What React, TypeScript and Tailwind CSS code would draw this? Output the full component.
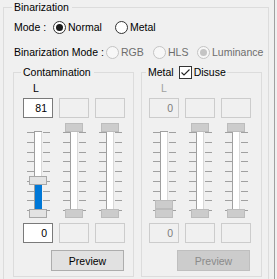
import React from "react";

const TICKS = [9, 19, 29, 38, 48, 58, 68, 77, 87];

function Slider({
  top,
  bottom,
  enabled,
}: {
  top: number;
  bottom: number;
  enabled: boolean;
}) {
  const thumbFill = enabled ? "#e3e3e3" : "#cccccc";
  const thumbStroke = enabled ? "#a8a8a8" : "#bcbcbc";
  return (
    <svg width="30" height="95" viewBox="0 0 30 95" className="block">
      {TICKS.map((y) => (
        <g key={y}>
          <rect x="4" y={y} width="7" height="1" fill="#a0a0a0" />
          <rect x="20" y={y} width="7" height="1" fill="#a0a0a0" />
        </g>
      ))}
      <rect x="11" y="8" width="1" height="84" fill="#a0a0a0" />
      <rect x="12" y="8" width="6" height="84" fill="#ffffff" />
      <rect x="18" y="8" width="1" height="84" fill="#dadada" />
      <rect x="11" y="8" width="8" height="1" fill="#a0a0a0" />
      {enabled && bottom - (top + 9) > 0 && (
        <rect x="12" y={top + 9} width="7" height={bottom - top - 9} fill="#0078d7" />
      )}
      <rect
        x="6.5"
        y={top + 0.5}
        width="17"
        height="8"
        fill={thumbFill}
        stroke={thumbStroke}
      />
      <rect
        x="6.5"
        y={bottom + 0.5}
        width="17"
        height="8"
        fill={thumbFill}
        stroke={thumbStroke}
      />
    </svg>
  );
}

function Radio({
  checked,
  disabled,
  label,
  width,
}: {
  checked?: boolean;
  disabled?: boolean;
  label: string;
  width: string;
}) {
  return (
    <div className={`flex items-center ${width}`}>
      <span
        className={`flex h-[13px] w-[13px] shrink-0 items-center justify-center rounded-full border ${
          disabled ? "border-[#c4c4c4] bg-[#f7f7f7]" : "border-[#333333] bg-white"
        }`}
      >
        {checked && (
          <span
            className={`block h-[7px] w-[7px] rounded-full ${
              disabled ? "bg-[#c4c4c4]" : "bg-[#1a1a1a]"
            }`}
          />
        )}
      </span>
      <span className={`ml-[2px] whitespace-nowrap ${disabled ? "text-[#6d6d6d]" : "text-black"}`}>
        {label}
      </span>
    </div>
  );
}

function Box({ value, active, gray }: { value?: string; active?: boolean; gray?: boolean }) {
  return (
    <div
      className={`flex h-[20px] w-[30px] items-center justify-end border pr-[5px] ${
        active ? "border-[#7a7a7a] bg-white text-black" : "border-[#cccccc] bg-[#f0f0f0]"
      } ${gray ? "text-[#7d7d7d]" : ""}`}
    >
      {value}
    </div>
  );
}

function Panel({
  legend,
  textPl,
  btnPl,
  lColor,
  topVals,
  bottomVals,
  activeFirst,
  sliders,
  btnEnabled,
}: {
  legend: React.ReactNode;
  textPl: string;
  btnPl: string;
  lColor: string;
  topVals: (string | undefined)[];
  bottomVals: (string | undefined)[];
  activeFirst: boolean;
  sliders: { top: number; bottom: number; enabled: boolean }[];
  btnEnabled: boolean;
}) {
  return (
    <div className="flex flex-col pb-[5px]">
      <div className={`mt-[2px] h-[14px] pl-[19px] ${lColor}`}>L</div>
      <div className={`mt-[3px] flex gap-[6px] ${textPl}`}>
        {topVals.map((v, i) => (
          <Box key={i} value={v} active={activeFirst && i === 0} gray={!activeFirst} />
        ))}
      </div>
      <div className={`mt-[5px] flex gap-[6px] ${textPl}`}>
        {sliders.map((s, i) => (
          <Slider key={i} top={s.top} bottom={s.bottom} enabled={s.enabled} />
        ))}
      </div>
      <div className={`mt-[5px] flex gap-[6px] ${textPl}`}>
        {bottomVals.map((v, i) => (
          <Box key={i} value={v} active={activeFirst && i === 0} gray={!activeFirst} />
        ))}
      </div>
      <div className={`mt-[7px] flex ${btnPl}`}>
        <div
          className={`flex h-[21px] w-[73px] items-center justify-center border ${
            btnEnabled
              ? "border-[#adadad] bg-[#e1e1e1] text-black"
              : "border-[#bfbfbf] bg-[#cccccc] text-[#8a8a8a]"
          }`}
        >
          Preview
        </div>
      </div>
    </div>
  );
}

export default function App() {
  return (
    <div className="flex h-[279px] w-[277px] overflow-hidden bg-[#f0f0f0] font-['Liberation_Sans',Arial,sans-serif] text-[10.5px] leading-[14px] text-black">
      <div className="w-[274px] shrink-0">
        <fieldset className="ml-[3px] w-[266px] border border-[#dcdcdc] pb-[20px]">
          <legend className="ml-[8px] h-[14px] pl-[2px] pr-[3px] leading-[14px]">Binarization</legend>
          <div className="mt-[4px] flex h-[18px] items-center pl-[10px]">
            <span className="w-[39px]">Mode :</span>
            <Radio checked label="Normal" width="w-[62px]" />
            <Radio label="Metal" width="w-[50px]" />
          </div>
          <div className="mt-[7px] flex h-[18px] items-center pl-[10px]">
            <span className="w-[92px] whitespace-nowrap">Binarization Mode :</span>
            <Radio disabled label="RGB" width="w-[47px]" />
            <Radio disabled label="HLS" width="w-[44px]" />
            <Radio disabled checked label="Luminance" width="w-[66px]" />
          </div>
          <div className="mt-[4px] flex pl-[9px]">
            <fieldset className="w-[121px] border border-[#dcdcdc]">
              <legend className="ml-[7px] h-[14px] pl-[2px] pr-[3px] leading-[14px]">Contamination</legend>
              <Panel
                legend={null}
                textPl="pl-[9px]"
                btnPl="pl-[37px]"
                lColor="text-black"
                topVals={["81", undefined, undefined]}
                bottomVals={["0", undefined, undefined]}
                activeFirst
                sliders={[
                  { top: 53, bottom: 86, enabled: true },
                  { top: 0, bottom: 86, enabled: false },
                  { top: 0, bottom: 86, enabled: false },
                ]}
                btnEnabled
              />
            </fieldset>
            <fieldset className="ml-[7px] w-[121px] border border-[#dcdcdc]">
              <legend className="ml-[4px] flex h-[14px] items-center pl-[2px] pr-[1px] leading-[14px]">
                <span>Metal</span>
                <span className="ml-[5px] flex h-[13px] w-[13px] items-center justify-center border border-[#333333] bg-white">
                  <svg width="11" height="11" viewBox="0 0 11 11">
                    <path d="M1.5 5.5 L4 8 L9.5 2.5" fill="none" stroke="#222222" strokeWidth="1.1" />
                  </svg>
                </span>
                <span className="ml-[2px]">Disuse</span>
              </legend>
              <Panel
                legend={null}
                textPl="pl-[7px]"
                btnPl="pl-[35px]"
                lColor="text-[#a0a0a0]"
                topVals={["0", undefined, undefined]}
                bottomVals={["0", undefined, undefined]}
                activeFirst={false}
                sliders={[
                  { top: 77, bottom: 86, enabled: false },
                  { top: 0, bottom: 86, enabled: false },
                  { top: 0, bottom: 86, enabled: false },
                ]}
                btnEnabled={false}
              />
            </fieldset>
          </div>
        </fieldset>
      </div>
      <div className="w-px shrink-0 bg-[#a0a0a0]" />
      <div className="flex-1 bg-[#f0f0f0]" />
    </div>
  );
}
